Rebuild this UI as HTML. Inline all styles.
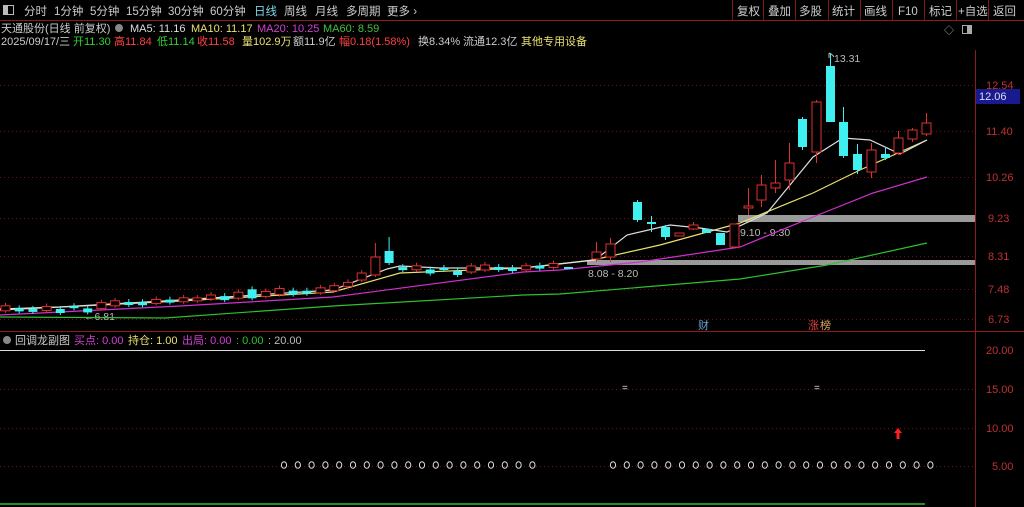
<!DOCTYPE html>
<html><head><meta charset="utf-8">
<style>
html,body{margin:0;padding:0;background:#000;width:1024px;height:507px;overflow:hidden;font-family:"Liberation Sans","Noto Sans CJK SC",sans-serif;}
svg{position:absolute;left:0;top:0}
</style></head><body>
<svg id="s" width="1024" height="507" xmlns="http://www.w3.org/2000/svg" font-family="Liberation Sans, Noto Sans CJK SC, sans-serif">
<rect width="1024" height="507" fill="#000"/>
<line x1="0" y1="20.5" x2="1024" y2="20.5" stroke="#8a1c1c"/>
<g stroke="#7a1a1a">
<line x1="732.5" y1="0" x2="732.5" y2="20"/><line x1="763.5" y1="0" x2="763.5" y2="20"/><line x1="795.5" y1="0" x2="795.5" y2="20"/><line x1="828.5" y1="0" x2="828.5" y2="20"/><line x1="860.5" y1="0" x2="860.5" y2="20"/><line x1="892.5" y1="0" x2="892.5" y2="20"/><line x1="924.5" y1="0" x2="924.5" y2="20"/><line x1="956.5" y1="0" x2="956.5" y2="20"/><line x1="988.5" y1="0" x2="988.5" y2="20"/>
</g>
<rect x="3.5" y="5.5" width="10" height="9" fill="none" stroke="#bbb"/><rect x="4" y="6" width="4" height="8" fill="#bbb"/>
<g fill="#ccc" font-size="11.5">
<text x="24" y="15">分时</text><text x="54" y="15">1分钟</text><text x="90" y="15">5分钟</text><text x="126" y="15">15分钟</text><text x="168" y="15">30分钟</text><text x="210" y="15">60分钟</text><text x="254" y="15" fill="#7fd4e8">日线</text><text x="284" y="15">周线</text><text x="315" y="15">月线</text><text x="346" y="15">多周期</text><text x="387" y="15">更多 ›</text>
<text x="737" y="15">复权</text><text x="768" y="15">叠加</text><text x="799" y="15">多股</text><text x="832" y="15">统计</text><text x="864" y="15">画线</text><text x="898" y="15">F10</text><text x="929" y="15">标记</text><text x="958" y="15">+自选</text><text x="993" y="15">返回</text>
</g>
<g font-size="11">
<text x="1" y="32" fill="#ccc">天通股份(日线 前复权)</text>
<circle cx="119" cy="28" r="4" fill="#888"/>
<text x="130" y="32" fill="#ddd">MA5: 11.16</text>
<text x="191" y="32" fill="#e8e070">MA10: 11.17</text>
<text x="257" y="32" fill="#d040d0">MA20: 10.25</text>
<text x="323" y="32" fill="#40c040">MA60: 8.59</text>
<text x="1" y="45" fill="#ccc">2025/09/17/三</text>
<text x="73" y="45" fill="#30d030">开11.30</text>
<text x="114" y="45" fill="#ff4040">高11.84</text>
<text x="157" y="45" fill="#30d030">低11.14</text>
<text x="197" y="45" fill="#ff4040">收11.58</text>
<text x="242" y="45" fill="#e8e070">量102.9万</text>
<text x="293" y="45" fill="#ccc">额11.9亿</text>
<text x="339" y="45" fill="#ff4040">幅0.18(1.58%)</text>
<text x="418" y="45" fill="#ccc">换8.34%</text>
<text x="463" y="45" fill="#ccc">流通12.3亿</text>
<text x="521" y="45" fill="#e8e070">其他专用设备</text>
</g>
<text x="944" y="34" fill="#aaa" font-size="10">◇</text>
<rect x="962.5" y="25.5" width="9" height="8" fill="none" stroke="#aaa"/><rect x="967" y="26" width="4" height="7" fill="#aaa"/>
<line x1="975.5" y1="50" x2="975.5" y2="507" stroke="#8a1c1c"/>
<line x1="0" y1="331.5" x2="1024" y2="331.5" stroke="#8a1c1c"/>
<g id="grid" stroke="#6a1414" stroke-dasharray="1,3"></g>
<g fill="#c03030" font-size="11">
<text x="986" y="89">12.54</text><text x="986" y="135">11.40</text><text x="986" y="181">10.26</text><text x="988" y="222">9.23</text><text x="988" y="260">8.31</text><text x="988" y="293">7.48</text><text x="988" y="323">6.73</text>
<text x="986" y="354">20.00</text><text x="986" y="393">15.00</text><text x="986" y="432">10.00</text><text x="992" y="470">5.00</text>
</g>
<rect x="976" y="89" width="44" height="15" fill="#1a1a90"/>
<text x="979" y="100" fill="#dde" font-size="11">12.06</text>
<rect x="738" y="215" width="237" height="7" fill="#9a9a9a"/>
<rect x="587" y="260" width="388" height="5" fill="#9a9a9a"/>
<text x="740" y="236" fill="#bbb" font-size="10.5">9.10 - 9.30</text>
<text x="588" y="277" fill="#bbb" font-size="10.5">8.08 - 8.20</text>
<text x="84" y="320" fill="#bbb" font-size="10.5">←6.81</text>
<text x="834" y="62" fill="#bbb" font-size="10.5">13.31</text>
<path d="M829 53 L829 58 M829 53 Q832 54 834 57" stroke="#bbb" fill="none"/>
<g id="ma" fill="none" stroke-width="1.2"></g>
<g id="cd"></g>
<text x="698" y="329" fill="#6aa0d0" font-size="11">财</text>
<text x="808" y="329" fill="#e04040" font-size="11">涨</text><text x="820" y="329" fill="#e0a060" font-size="11">榜</text>
<circle cx="7" cy="340" r="4" fill="#888"/>
<g font-size="11">
<text x="15" y="344" fill="#ccc">回调龙副图</text>
<text x="74" y="344" fill="#d040d0">买点: 0.00</text>
<text x="128" y="344" fill="#e8e070">持仓: 1.00</text>
<text x="182" y="344" fill="#d040d0">出局: 0.00</text>
<text x="236" y="344" fill="#30c030">: 0.00</text>
<text x="268" y="344" fill="#bbb">: 20.00</text>
</g>
<line x1="0" y1="350.5" x2="925" y2="350.5" stroke="#ddd"/>
<line x1="0" y1="504" x2="925" y2="504" stroke="#30c030" stroke-width="1.5"/>
<text x="622" y="391" fill="#ddd" font-size="10">=</text><text x="814" y="391" fill="#ddd" font-size="10">=</text>
<path d="M898 428 L902 433 L899.5 433 L899.5 439 L896.5 439 L896.5 433 L894 433 Z" fill="#ff2020"/>
<g id="oo" fill="none" stroke="#ddd" stroke-width="1"></g>
</svg>
<script>
var NS="http://www.w3.org/2000/svg";
function el(p,t,a){var e=document.createElementNS(NS,t);for(var k in a)e.setAttribute(k,a[k]);document.getElementById(p).appendChild(e);return e;}
[85,131,177,218,256,289,319,389,428,466].forEach(function(y){el("grid","line",{x1:0,y1:y+.5,x2:975,y2:y+.5});});
function pl(c,pts){el("ma","polyline",{points:pts.map(function(p){return p.join(",")}).join(" "),stroke:c});}
pl("#30c030",[[0,317],[165,318],[333,306],[523,295],[560,294],[740,279],[827,265],[927,243]]);
pl("#d030d0",[[0,315],[180,306],[333,297],[523,272],[560,270],[640,262],[740,247],[813,217],[873,193],[927,177]]);
pl("#e8e070",[[0,310],[180,301],[333,292],[400,273],[523,268],[593,260],[660,245],[740,223],[813,193],[860,170],[927,140]]);
pl("#dddddd",[[0,309],[60,307],[180,300],[333,290],[387,269],[400,266],[440,268],[523,268],[595,260],[627,235],[670,225],[700,228],[727,232],[767,213],[813,157],[843,138],[870,140],[900,154],[927,140]]);
function cand(x,t,b,up,wt,wb){var c=up?"#e03030":"#40f0f0";
 el("cd","line",{x1:x+.5,y1:wt||t,x2:x+.5,y2:wb||b,stroke:c});
 if(up)el("cd","rect",{x:x-4,y:t,width:9,height:Math.max(b-t,1),fill:"#000",stroke:c});
 else el("cd","rect",{x:x-4,y:t,width:9,height:Math.max(b-t,1.5),fill:c});}
var wy=[[0,309],[60,307],[180,300],[333,290],[387,269],[400,266],[440,268],[523,268],[570,264]];
function interp(x){for(var i=0;i<wy.length-1;i++){if(x<=wy[i+1][0]){var f=(x-wy[i][0])/(wy[i+1][0]-wy[i][0]);return wy[i][1]+f*(wy[i+1][1]-wy[i][1]);}}return 264;}
var pat=[[-3,1,1],[0,2,0],[1,3,0],[-1,2,1],[2,5,0],[0,1,0],[3,6,0],[-2,3,1],[-3,1,1],[-1,1,0],[0,2,0],[-2,1,1],[-1,1,0],[-2,1,1],[-1,1,1],[-3,0,1],[-1,2,0],[-4,1,1],[-6,2,0],[-3,1,1],[-5,0,1],[-2,1,0],[-1,1,0],[-3,1,1],[-4,0,1],[-2,1,1],[-6,0,1]];
for(var i=0;i<41;i++){var x=5+i*13.7,m=interp(x);
 if(i==27){cand(x,257,275,1,243,277);continue;}
 if(i==28){cand(x,251,263,0,237,265);continue;}
 var p=pat[i%pat.length];cand(x,m+p[0],m+p[1]+1,p[2],m+p[0]-3,m+p[1]+3);}
var R=[[568,267,269,0],[596,252,259,1,242,262],[610,244,257,1,238,262],[637,202,220,0,200,222],[651,222,224,0,216,232],[665,227,237,0,225,240],[679,233,236,1],[693,225,229,1,222,230],[706,229,233,0],[720,233,245,0],[734,224,247,1],[748,206,208,1,188,215],[761,185,200,1,175,207],[775,183,188,1,160,193],[789,163,180,1,143,190],[802,119,147,0,117,150],[816,102,152,1,100,163],[830,66,122,0,53,122],[843,122,156,0,107,158],[857,154,170,0,144,174],[871,150,172,1,143,178],[885,154,158,0,147,160],[898,138,153,1,131,155],[912,130,139,1,128,142],[926,123,134,1,113,136]];
R.forEach(function(r){cand(r[0],r[1],r[2],r[3],r[4],r[5]);});
for(var i=0;i<19;i++)el("oo","ellipse",{cx:284+i*13.8,cy:465,rx:2.6,ry:3.3});
for(var i=0;i<24;i++)el("oo","ellipse",{cx:613+i*13.8,cy:465,rx:2.6,ry:3.3});
</script>
</body></html>
